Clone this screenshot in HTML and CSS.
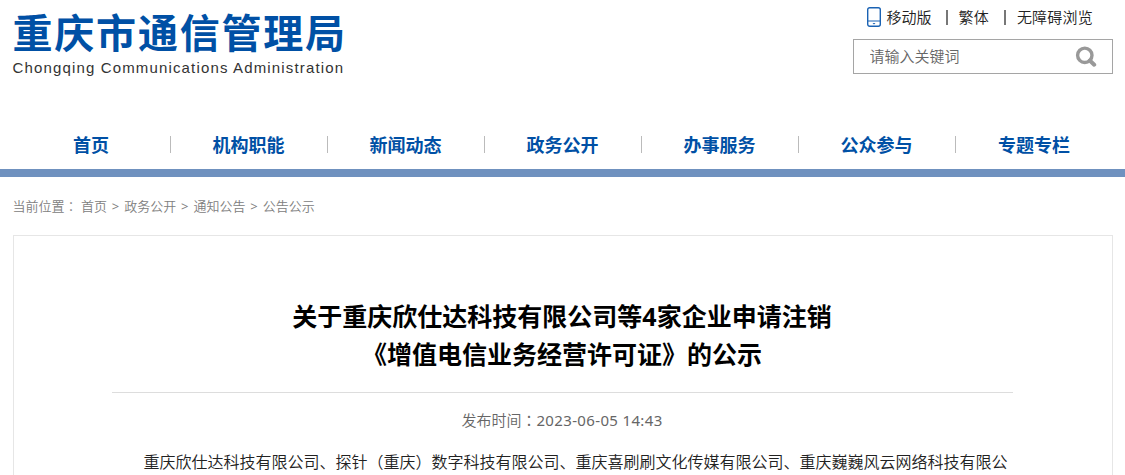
FILE: index.html
```html
<!DOCTYPE html>
<html lang="zh-CN">
<head>
    <meta charset="UTF-8">
    <meta name="viewport" content="width=device-width, initial-scale=1.0">
    <title>重庆市通信管理局</title>
    <link rel="stylesheet" href="styles.css">
</head>
<body>

    <!-- Header -->
    <div class="header">
        <div class="logo">
            <h1>重庆市通信管理局</h1>
            <p>Chongqing Communications Administration</p>
        </div>
        <div class="header-right">
            <div class="top-links">
                <svg class="phone" width="14" height="20" viewBox="0 0 14 20" fill="none" stroke="#1a62b3" stroke-width="1.4">
                    <rect x=".7" y=".7" width="12.6" height="18.6" rx="2"/>
                    <path d="M1 14h12" stroke-width="1"/>
                    <path d="M5.5 16h3L7 17.5z" fill="#1a62b3" stroke="none"/>
                </svg>
                <a>移动版</a><i></i><a>繁体</a><i></i><a>无障碍浏览</a>
            </div>
            <form class="search">
                <input type="text" placeholder="请输入关键词">
                <svg width="22" height="22" viewBox="0 0 22 22" fill="none" stroke="#999" stroke-width="3.4">
                    <circle cx="9.8" cy="9.3" r="7.2"/>
                    <path d="M14.8 14.5l4.4 4.2" stroke-width="4" stroke-linecap="round"/>
                </svg>
            </form>
        </div>
    </div>

    <!-- Navigation -->
    <div class="nav">
        <ul>
            <li>首页</li>
            <li>机构职能</li>
            <li>新闻动态</li>
            <li>政务公开</li>
            <li>办事服务</li>
            <li>公众参与</li>
            <li>专题专栏</li>
        </ul>
    </div>

    <div class="position">当前位置<span class="colon" lang="zh-TW">：</span> <a>首页</a> <b>&gt;</b> <a>政务公开</a> <b>&gt;</b> <a>通知公告</a> <b>&gt;</b> <a>公告公示</a></div>

    <!-- Article -->
    <div class="article">
        <h2>关于重庆欣仕达科技有限公司等4家企业申请注销<br>《增值电信业务经营许可证》的公示</h2>
        <div class="date">发布时间<span class="colon" lang="zh-TW">：</span><span class="time">2023-06-05 14:43</span></div>
        <p class="content">重庆欣仕达科技有限公司、探针（重庆）数字科技有限公司、重庆喜刷刷文化传媒有限公司、重庆巍巍风云网络科技有限公</p>
    </div>

</body>
</html>
```
FILE: styles.css
```css
body {
    margin: 0;
    height: 475px;
    overflow: hidden;
    background: #fff;
    font-family: "Noto Sans", "Noto Sans CJK SC", sans-serif;
    font-weight: 350;
}
h1, h2, p, ul {
    margin: 0;
    padding: 0;
}
.colon {
    font-family: "Noto Sans CJK TC", sans-serif;
    line-height: 1;
}
.header {
    display: flex;
    justify-content: space-between;
    width: 1100px;
    height: 120px;
    margin: 0 auto;
}
.logo h1 {
    padding-top: 6px;
    font-size: 40px;
    line-height: 53px;
    letter-spacing: 1.8px;
    color: #0050a5;
    white-space: nowrap;
}
.logo p {
    font: 15px/18px "Liberation Sans", sans-serif;
    letter-spacing: 1.15px;
    color: #333;
    white-space: nowrap;
}
.header-right {
    width: 260px;
}
.top-links {
    display: flex;
    align-items: center;
    height: 20px;
    padding: 7px 0 12px 14px;
    font-size: 15px;
    line-height: 20px;
    color: #222;
    white-space: nowrap;
}
.phone {
    margin-right: 6px;
}
.top-links i {
    width: 2px;
    height: 15px;
    margin: 0 11px 0 14px;
    background: #777;
}
.top-links i + a {
    letter-spacing: 0.2px;
}
.top-links i:last-of-type {
    margin-left: 15px;
}
.search {
    display: flex;
    align-items: center;
    box-sizing: border-box;
    height: 35px;
    padding: 0 15px 0 16px;
    border: 1px solid #a5a5a5;
}
.search input {
    flex: 1;
    min-width: 0;
    padding: 0 0 2px;
    border: 0;
    outline: 0;
    font-family: inherit;
    font-size: 15px;
    font-weight: 350;
}
.search input::placeholder {
    color: #666;
}
.nav {
    height: 49px;
    border-bottom: 8px solid #6f91bf;
}
.nav ul {
    display: flex;
    width: 1100px;
    margin: 0 auto;
    list-style: none;
}
.nav li {
    width: 157px;
    margin-top: 16px;
    box-sizing: border-box;
    height: 17px;
    line-height: 19px;
    font-size: 18px;
    font-weight: bold;
    text-align: center;
    color: #0050a5;
}
.nav li:first-child {
    width: 158px;
}
.nav li:not(:last-child) {
    border-right: 1px solid #bbb;
}
.position {
    width: 1100px;
    height: 58px;
    margin: 0 auto;
    font-size: 13px;
    line-height: 58px;
    color: #808080;
}
.position b {
    margin: 0 1.5px;
    font-weight: 400;
}
.article {
    box-sizing: border-box;
    width: 1100px;
    height: 260px;
    margin: 0 auto;
    padding: 61px 99px 0 98px;
    border: 1px solid #e6e6e6;
}
.article h2 {
    padding-bottom: 19px;
    border-bottom: 1px solid #ddd;
    font-size: 25px;
    line-height: 38px;
    text-align: center;
    color: #000;
}
.date {
    height: 20px;
    padding: 17px 0 18px;
    font-size: 15px;
    line-height: 20px;
    text-align: center;
    color: #666;
}
.time {
    font-weight: 400;
    letter-spacing: 0.35px;
}
.content {
    font-size: 16px;
    line-height: 28px;
    text-indent: 2em;
    color: #222;
    white-space: nowrap;
}
```
